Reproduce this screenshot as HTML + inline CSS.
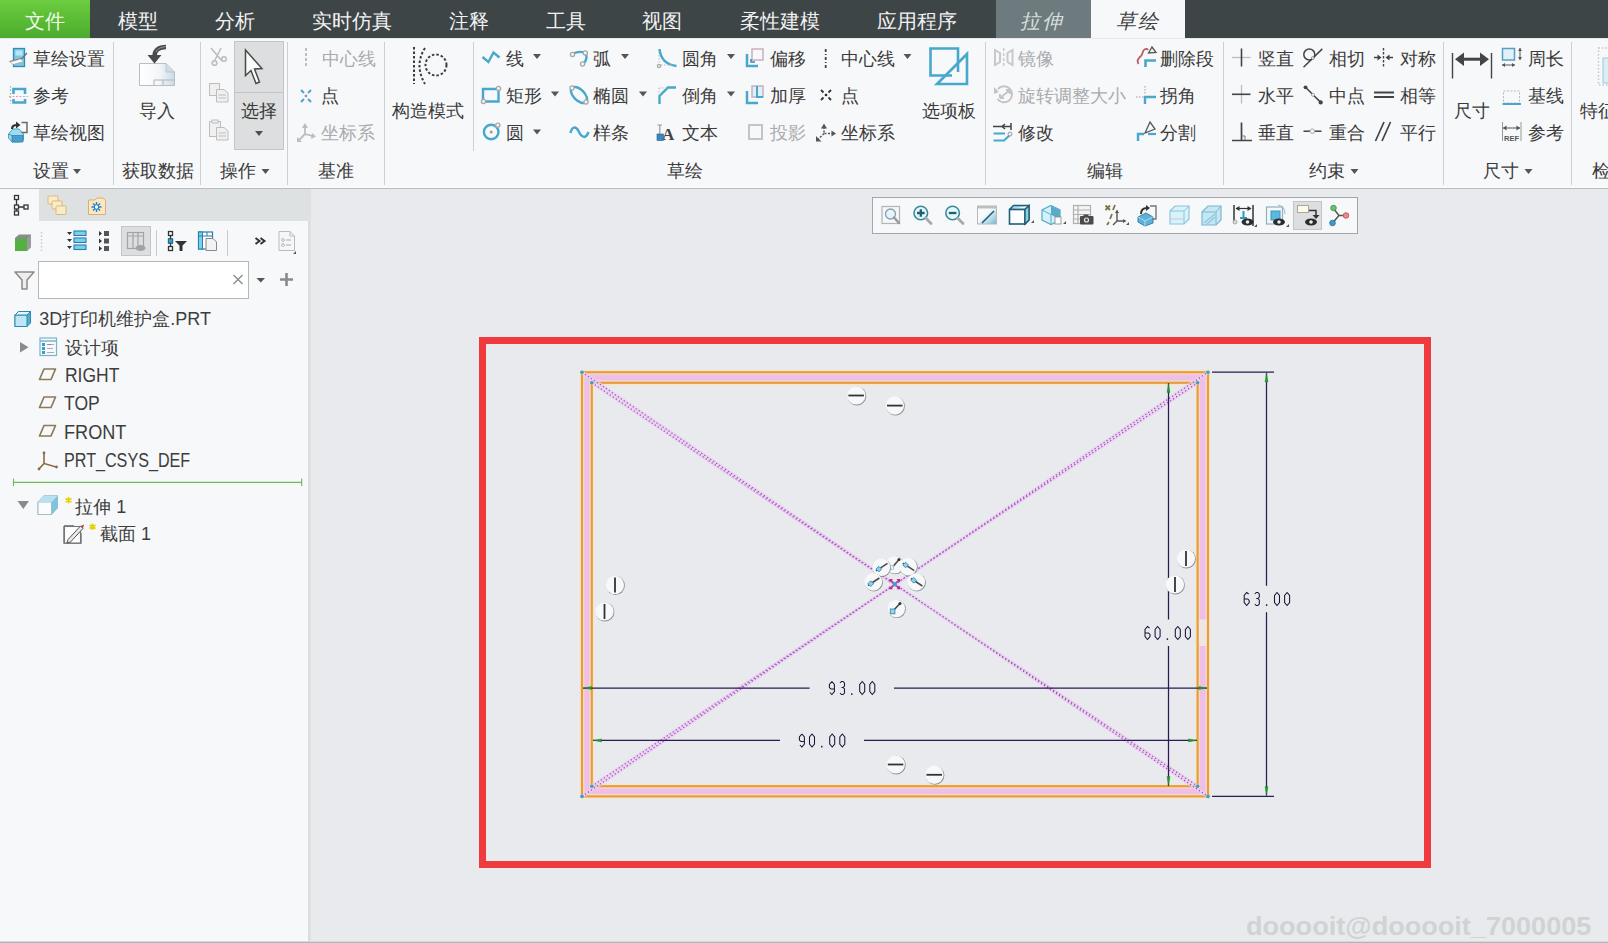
<!DOCTYPE html>
<html><head><meta charset="utf-8"><style>
html,body{margin:0;padding:0;width:1608px;height:943px;overflow:hidden;background:#e9eaed}
.t{position:absolute;white-space:nowrap;font-family:'Liberation Sans',sans-serif}
svg{position:absolute;left:0;top:0}
</style></head><body>
<div style="position:absolute;left:0px;top:0px;width:1608px;height:38px;background:#3d4547"></div><div style="position:absolute;left:0px;top:0px;width:90px;height:38px;background:linear-gradient(#6ccd40,#4aac2b)"></div><div style="position:absolute;left:996px;top:0px;width:95px;height:38px;background:#6d7b7e"></div><div style="position:absolute;left:1091px;top:0px;width:94px;height:38px;background:#f7f8fa"></div><div style="position:absolute;left:0px;top:39px;width:1608px;height:149px;background:#f7f8fa"></div><div style="position:absolute;left:0px;top:187px;width:1608px;height:1px;background:#fdfdfe"></div><div style="position:absolute;left:0px;top:188px;width:1608px;height:1px;background:#b9bcbf"></div><div style="position:absolute;left:0px;top:189px;width:309px;height:754px;background:#f7f8fa"></div><div style="position:absolute;left:39px;top:189px;width:272px;height:32px;background:#dde1e1"></div><div style="position:absolute;left:308px;top:221px;width:2px;height:722px;background:#d9dddd"></div><div style="position:absolute;left:310px;top:221px;width:1px;height:722px;background:#e1e3e4"></div><div style="position:absolute;left:311px;top:189px;width:1297px;height:754px;background:#e9eaed"></div><div style="position:absolute;left:0px;top:941px;width:1608px;height:1px;background:#d5dcdc"></div><div style="position:absolute;left:0px;top:942px;width:1608px;height:1px;background:#a9b8b8"></div><div class="t" style="left:117.6px;top:11.0px;font-size:20px;line-height:20px;color:#f2f2f2;">模型</div><div class="t" style="left:214.6px;top:11.0px;font-size:20px;line-height:20px;color:#f2f2f2;">分析</div><div class="t" style="left:311.6px;top:11.0px;font-size:20px;line-height:20px;color:#f2f2f2;">实时仿真</div><div class="t" style="left:448.6px;top:11.0px;font-size:20px;line-height:20px;color:#f2f2f2;">注释</div><div class="t" style="left:545.6px;top:11.0px;font-size:20px;line-height:20px;color:#f2f2f2;">工具</div><div class="t" style="left:641.6px;top:11.0px;font-size:20px;line-height:20px;color:#f2f2f2;">视图</div><div class="t" style="left:740.1px;top:11.0px;font-size:20px;line-height:20px;color:#f2f2f2;">柔性建模</div><div class="t" style="left:876.6px;top:11.0px;font-size:20px;line-height:20px;color:#f2f2f2;">应用程序</div><div class="t" style="left:24.6px;top:11.0px;font-size:20px;line-height:20px;color:#f0f8ea;">文件</div><div class="t" style="left:1019.6px;top:11.0px;font-size:20px;line-height:20px;color:#d6dcdc;font-style:italic;letter-spacing:2px;">拉伸</div><div class="t" style="left:1115.6px;top:11.0px;font-size:20px;line-height:20px;color:#404040;font-style:italic;letter-spacing:2px;">草绘</div><div style="position:absolute;left:113px;top:42px;width:1px;height:143px;background:#cdd0d2"></div><div style="position:absolute;left:200px;top:42px;width:1px;height:143px;background:#cdd0d2"></div><div style="position:absolute;left:287px;top:42px;width:1px;height:143px;background:#cdd0d2"></div><div style="position:absolute;left:384px;top:42px;width:1px;height:143px;background:#cdd0d2"></div><div style="position:absolute;left:985px;top:42px;width:1px;height:143px;background:#cdd0d2"></div><div style="position:absolute;left:1223px;top:42px;width:1px;height:143px;background:#cdd0d2"></div><div style="position:absolute;left:1443px;top:42px;width:1px;height:143px;background:#cdd0d2"></div><div style="position:absolute;left:1571px;top:42px;width:1px;height:143px;background:#cdd0d2"></div><div style="position:absolute;left:473px;top:42px;width:1px;height:109px;background:#cdd0d2"></div><div class="t" style="left:32.6px;top:50.0px;font-size:18px;line-height:18px;color:#3b3b3b;">草绘设置</div><div class="t" style="left:32.6px;top:86.5px;font-size:18px;line-height:18px;color:#3b3b3b;">参考</div><div class="t" style="left:32.6px;top:123.6px;font-size:18px;line-height:18px;color:#3b3b3b;">草绘视图</div><div class="t" style="left:32.6px;top:161.8px;font-size:18px;line-height:18px;color:#3b3b3b;">设置</div><div class="t" style="left:121.6px;top:161.8px;font-size:18px;line-height:18px;color:#3b3b3b;">获取数据</div><div class="t" style="left:138.6px;top:101.8px;font-size:18px;line-height:18px;color:#3b3b3b;">导入</div><div style="position:absolute;left:234px;top:41px;width:50px;height:109px;background:#dcdee0;border:1px solid #c3c6c8;box-sizing:border-box"></div><div style="position:absolute;left:235px;top:92px;width:48px;height:1px;background:#c3c6c8"></div><div class="t" style="left:241.1px;top:101.8px;font-size:18px;line-height:18px;color:#3b3b3b;">选择</div><div class="t" style="left:220.1px;top:161.8px;font-size:18px;line-height:18px;color:#3b3b3b;">操作</div><div class="t" style="left:321.6px;top:50.0px;font-size:18px;line-height:18px;color:#a9abad;">中心线</div><div class="t" style="left:320.6px;top:86.5px;font-size:18px;line-height:18px;color:#3b3b3b;">点</div><div class="t" style="left:320.6px;top:123.6px;font-size:18px;line-height:18px;color:#a9abad;">坐标系</div><div class="t" style="left:317.6px;top:161.8px;font-size:18px;line-height:18px;color:#3b3b3b;">基准</div><div class="t" style="left:391.6px;top:101.8px;font-size:18px;line-height:18px;color:#3b3b3b;">构造模式</div><div class="t" style="left:505.6px;top:50.0px;font-size:18px;line-height:18px;color:#3b3b3b;">线</div><div class="t" style="left:505.6px;top:86.5px;font-size:18px;line-height:18px;color:#3b3b3b;">矩形</div><div class="t" style="left:505.6px;top:123.6px;font-size:18px;line-height:18px;color:#3b3b3b;">圆</div><div class="t" style="left:593.0px;top:50.0px;font-size:18px;line-height:18px;color:#3b3b3b;">弧</div><div class="t" style="left:593.0px;top:86.5px;font-size:18px;line-height:18px;color:#3b3b3b;">椭圆</div><div class="t" style="left:593.0px;top:123.6px;font-size:18px;line-height:18px;color:#3b3b3b;">样条</div><div class="t" style="left:682.0px;top:50.0px;font-size:18px;line-height:18px;color:#3b3b3b;">圆角</div><div class="t" style="left:682.0px;top:86.5px;font-size:18px;line-height:18px;color:#3b3b3b;">倒角</div><div class="t" style="left:682.0px;top:123.6px;font-size:18px;line-height:18px;color:#3b3b3b;">文本</div><div class="t" style="left:770.1px;top:50.0px;font-size:18px;line-height:18px;color:#3b3b3b;">偏移</div><div class="t" style="left:770.1px;top:86.5px;font-size:18px;line-height:18px;color:#3b3b3b;">加厚</div><div class="t" style="left:770.1px;top:123.6px;font-size:18px;line-height:18px;color:#a9abad;">投影</div><div class="t" style="left:841.1px;top:50.0px;font-size:18px;line-height:18px;color:#3b3b3b;">中心线</div><div class="t" style="left:841.1px;top:86.5px;font-size:18px;line-height:18px;color:#3b3b3b;">点</div><div class="t" style="left:841.1px;top:123.6px;font-size:18px;line-height:18px;color:#3b3b3b;">坐标系</div><div class="t" style="left:921.6px;top:101.8px;font-size:18px;line-height:18px;color:#3b3b3b;">选项板</div><div class="t" style="left:666.6px;top:161.8px;font-size:18px;line-height:18px;color:#3b3b3b;">草绘</div><div class="t" style="left:1017.6px;top:50.0px;font-size:18px;line-height:18px;color:#a9abad;">镜像</div><div class="t" style="left:1017.6px;top:86.5px;font-size:18px;line-height:18px;color:#a9abad;">旋转调整大小</div><div class="t" style="left:1017.6px;top:123.6px;font-size:18px;line-height:18px;color:#3b3b3b;">修改</div><div class="t" style="left:1160.2px;top:50.0px;font-size:18px;line-height:18px;color:#3b3b3b;">删除段</div><div class="t" style="left:1160.2px;top:86.5px;font-size:18px;line-height:18px;color:#3b3b3b;">拐角</div><div class="t" style="left:1160.2px;top:123.6px;font-size:18px;line-height:18px;color:#3b3b3b;">分割</div><div class="t" style="left:1086.6px;top:161.8px;font-size:18px;line-height:18px;color:#3b3b3b;">编辑</div><div class="t" style="left:1257.6px;top:50.0px;font-size:18px;line-height:18px;color:#3b3b3b;">竖直</div><div class="t" style="left:1257.6px;top:86.5px;font-size:18px;line-height:18px;color:#3b3b3b;">水平</div><div class="t" style="left:1257.6px;top:123.6px;font-size:18px;line-height:18px;color:#3b3b3b;">垂直</div><div class="t" style="left:1328.6px;top:50.0px;font-size:18px;line-height:18px;color:#3b3b3b;">相切</div><div class="t" style="left:1328.6px;top:86.5px;font-size:18px;line-height:18px;color:#3b3b3b;">中点</div><div class="t" style="left:1328.6px;top:123.6px;font-size:18px;line-height:18px;color:#3b3b3b;">重合</div><div class="t" style="left:1399.6px;top:50.0px;font-size:18px;line-height:18px;color:#3b3b3b;">对称</div><div class="t" style="left:1399.6px;top:86.5px;font-size:18px;line-height:18px;color:#3b3b3b;">相等</div><div class="t" style="left:1399.6px;top:123.6px;font-size:18px;line-height:18px;color:#3b3b3b;">平行</div><div class="t" style="left:1309.1px;top:161.8px;font-size:18px;line-height:18px;color:#3b3b3b;">约束</div><div class="t" style="left:1454.1px;top:101.8px;font-size:18px;line-height:18px;color:#3b3b3b;">尺寸</div><div class="t" style="left:1527.6px;top:50.0px;font-size:18px;line-height:18px;color:#3b3b3b;">周长</div><div class="t" style="left:1527.6px;top:86.5px;font-size:18px;line-height:18px;color:#3b3b3b;">基线</div><div class="t" style="left:1527.6px;top:123.6px;font-size:18px;line-height:18px;color:#3b3b3b;">参考</div><div class="t" style="left:1483.1px;top:161.8px;font-size:18px;line-height:18px;color:#3b3b3b;">尺寸</div><div class="t" style="left:1579.6px;top:101.8px;font-size:18px;line-height:18px;color:#3b3b3b;">特征</div><div class="t" style="left:1591.6px;top:161.8px;font-size:18px;line-height:18px;color:#3b3b3b;">检</div><div style="position:absolute;left:38px;top:261px;width:211px;height:38px;background:#fff;border:1px solid #b5b8ba;box-sizing:border-box"></div><div class="t" style="left:39.3px;top:310.3px;font-size:18px;line-height:18px;color:#3d3d3d;">3D打印机维护盒.PRT</div><div class="t" style="left:64.6px;top:338.8px;font-size:18px;line-height:18px;color:#3d3d3d;">设计项</div><div class="t" style="left:64.7px;top:365.0px;font-size:20px;line-height:20px;color:#3d3d3d;transform:scaleX(0.874);transform-origin:0 0">RIGHT</div><div class="t" style="left:64.3px;top:393.0px;font-size:20px;line-height:20px;color:#3d3d3d;transform:scaleX(0.876);transform-origin:0 0">TOP</div><div class="t" style="left:63.7px;top:421.7px;font-size:20px;line-height:20px;color:#3d3d3d;transform:scaleX(0.906);transform-origin:0 0">FRONT</div><div class="t" style="left:63.7px;top:449.6px;font-size:20px;line-height:20px;color:#3d3d3d;transform:scaleX(0.807);transform-origin:0 0">PRT_CSYS_DEF</div><div class="t" style="left:75.3px;top:497.8px;font-size:18px;line-height:18px;color:#3d3d3d;">拉伸 1</div><div class="t" style="left:100.1px;top:524.8px;font-size:18px;line-height:18px;color:#3d3d3d;">截面 1</div><div class="t" style="left:1246px;top:913.5px;font-size:25px;line-height:25px;font-weight:bold;color:#d1d2d4;transform:scaleX(1.083);transform-origin:0 0">dooooit@dooooit_7000005</div><div style="position:absolute;left:872px;top:197px;width:486px;height:37px;background:#f7f8fa;border:1px solid #a3a7aa;box-sizing:border-box"></div><div style="position:absolute;left:1293px;top:201px;width:29px;height:29px;background:#dcdee0;border:1px solid #c3c6c8;box-sizing:border-box"></div><div style="position:absolute;left:121px;top:226px;width:30px;height:30px;background:#dcdee0;border:1px solid #c3c6c8;box-sizing:border-box"></div><div style="position:absolute;left:156px;top:230px;width:1px;height:26px;background:#c9cbcd"></div><div style="position:absolute;left:227px;top:230px;width:1px;height:26px;background:#c9cbcd"></div>
<svg width="1608" height="943" viewBox="0 0 1608 943">
<path d="M73,169 h8 l-4,5 z" fill="#555"/><path d="M255,131 h8 l-4,5 z" fill="#505050"/><path d="M261.5,169 h8 l-4,5 z" fill="#555"/><path d="M533,54 h8 l-4,5 z" fill="#555"/><path d="M551,91.5 h8 l-4,5 z" fill="#555"/><path d="M533,129.5 h8 l-4,5 z" fill="#555"/><path d="M621,54 h8 l-4,5 z" fill="#555"/><path d="M639,91.5 h8 l-4,5 z" fill="#555"/><path d="M727,54 h8 l-4,5 z" fill="#555"/><path d="M727,91.5 h8 l-4,5 z" fill="#555"/><path d="M903.5,54 h8 l-4,5 z" fill="#555"/><path d="M1350.5,169 h8 l-4,5 z" fill="#555"/><path d="M1524.5,169 h8 l-4,5 z" fill="#555"/><rect x="482.5" y="340.5" width="945" height="524" fill="none" stroke="#ef3b3e" stroke-width="7"/><path d="M582,372.2 H1208 V796.4 H582 Z M591.8,382.8 V786.2 H1197.6 V382.8 Z" fill="#eec0e8" fill-rule="evenodd"/><rect x="582" y="372.2" width="626" height="424.2" fill="none" stroke="#fbe3b4" stroke-width="4.6" opacity="0.75"/><rect x="591.8" y="382.8" width="605.8" height="403.40000000000003" fill="none" stroke="#fbe3b4" stroke-width="4.6" opacity="0.75"/><path d="M582,372.2 H1208 V796.4 H582 Z M594.0999999999999,380.5 V783.9000000000001 H1195.3 V385.1 Z" fill="none"/><rect x="582" y="372.2" width="626" height="424.2" fill="none" stroke="#e49c3c" stroke-width="2.1"/><rect x="591.8" y="382.8" width="605.8" height="403.40000000000003" fill="none" stroke="#e49c3c" stroke-width="2.1"/><path d="M582,372.2 L1208,796.4 M582,796.4 L1208,372.2 M591.8,382.8 L1197.6,786.2 M591.8,786.2 L1197.6,382.8" stroke="#eecdf2" stroke-width="3.6" fill="none" opacity="0.8"/><path d="M582,372.2 L1208,796.4 M582,796.4 L1208,372.2 M591.8,382.8 L1197.6,786.2 M591.8,786.2 L1197.6,382.8" stroke="#9458b2" stroke-width="1.25" stroke-dasharray="1.3 2.3" fill="none"/><rect x="1199" y="619.5" width="7.6" height="26.5" fill="#efe6e4"/><circle cx="582" cy="372.2" r="1.8" fill="#35a2c0"/><circle cx="1208" cy="372.2" r="1.8" fill="#35a2c0"/><circle cx="582" cy="796.4" r="1.8" fill="#35a2c0"/><circle cx="1208" cy="796.4" r="1.8" fill="#35a2c0"/><circle cx="591.8" cy="382.8" r="1.8" fill="#35a2c0"/><circle cx="1197.6" cy="382.8" r="1.8" fill="#35a2c0"/><circle cx="591.8" cy="786.2" r="1.8" fill="#35a2c0"/><circle cx="1197.6" cy="786.2" r="1.8" fill="#35a2c0"/><path d="M583,688 H809.6 M894,688 H1207 M593,740.4 H780 M864,740.4 H1197 M1168.5,383 V619.6 M1168.5,646 V786 M1266.5,373 V585.8 M1266.5,612.2 V795.5 M1212,372.2 H1274 M1212,796.4 H1274" stroke="#2b1b52" stroke-width="1.25" fill="none"/><path d="M583.5,688 l8,-1.5 v3 z" fill="#1e9a2a" stroke="#1a8a1a" stroke-width="0.4"/><path d="M1207,688 l-8,-1.5 v3 z" fill="#1e9a2a" stroke="#1a8a1a" stroke-width="0.4"/><path d="M593.5,740.4 l8,-1.5 v3 z" fill="#1e9a2a" stroke="#1a8a1a" stroke-width="0.4"/><path d="M1196.5,740.4 l-8,-1.5 v3 z" fill="#1e9a2a" stroke="#1a8a1a" stroke-width="0.4"/><path d="M1168.5,383.5 l-1.5,9 h3 z" fill="#1e9a2a" stroke="#1a8a1a" stroke-width="0.4"/><path d="M1168.5,785.5 l-1.5,-9 h3 z" fill="#1e9a2a" stroke="#1a8a1a" stroke-width="0.4"/><path d="M1266.5,373 l-1.5,9 h3 z" fill="#1e9a2a" stroke="#1a8a1a" stroke-width="0.4"/><path d="M1266.5,795.5 l-1.5,-9 h3 z" fill="#1e9a2a" stroke="#1a8a1a" stroke-width="0.4"/><path transform="translate(828.9,681)" d="M3,0.5 L0.5,3.5 V6.5 L2,8 H5.5 M3,0.5 L5.5,3.5 V10.5 L3,13.5 L1,11.5" stroke="#1b1238" stroke-width="1.05" fill="none"/><path transform="translate(839.0,681)" d="M1,2 L2.5,0.5 H4 L5.5,2 V5 L4,6.5 H2.5 M4,6.5 L5.5,8 V12 L4,13.5 H2.5 L1,12" stroke="#1b1238" stroke-width="1.05" fill="none"/><rect x="851.1" y="693.3" width="1.4" height="1.6" fill="#1b1238"/><path transform="translate(859.2,681)" d="M3,0.5 L0.5,3.5 V10.5 L3,13.5 L5.5,10.5 V3.5 Z" stroke="#1b1238" stroke-width="1.05" fill="none"/><path transform="translate(869.3,681)" d="M3,0.5 L0.5,3.5 V10.5 L3,13.5 L5.5,10.5 V3.5 Z" stroke="#1b1238" stroke-width="1.05" fill="none"/><path transform="translate(798.9,733.5)" d="M3,0.5 L0.5,3.5 V6.5 L2,8 H5.5 M3,0.5 L5.5,3.5 V10.5 L3,13.5 L1,11.5" stroke="#1b1238" stroke-width="1.05" fill="none"/><path transform="translate(809.0,733.5)" d="M3,0.5 L0.5,3.5 V10.5 L3,13.5 L5.5,10.5 V3.5 Z" stroke="#1b1238" stroke-width="1.05" fill="none"/><rect x="821.1" y="745.8" width="1.4" height="1.6" fill="#1b1238"/><path transform="translate(829.2,733.5)" d="M3,0.5 L0.5,3.5 V10.5 L3,13.5 L5.5,10.5 V3.5 Z" stroke="#1b1238" stroke-width="1.05" fill="none"/><path transform="translate(839.3,733.5)" d="M3,0.5 L0.5,3.5 V10.5 L3,13.5 L5.5,10.5 V3.5 Z" stroke="#1b1238" stroke-width="1.05" fill="none"/><path transform="translate(1144.5,626)" d="M5,2 L3,0.5 L0.5,3.5 V10.5 L3,13.5 L5.5,10.5 V8.5 L4,7 H0.5" stroke="#1b1238" stroke-width="1.05" fill="none"/><path transform="translate(1154.6,626)" d="M3,0.5 L0.5,3.5 V10.5 L3,13.5 L5.5,10.5 V3.5 Z" stroke="#1b1238" stroke-width="1.05" fill="none"/><rect x="1166.7" y="638.3" width="1.4" height="1.6" fill="#1b1238"/><path transform="translate(1174.8,626)" d="M3,0.5 L0.5,3.5 V10.5 L3,13.5 L5.5,10.5 V3.5 Z" stroke="#1b1238" stroke-width="1.05" fill="none"/><path transform="translate(1184.9,626)" d="M3,0.5 L0.5,3.5 V10.5 L3,13.5 L5.5,10.5 V3.5 Z" stroke="#1b1238" stroke-width="1.05" fill="none"/><path transform="translate(1243.7,592)" d="M5,2 L3,0.5 L0.5,3.5 V10.5 L3,13.5 L5.5,10.5 V8.5 L4,7 H0.5" stroke="#1b1238" stroke-width="1.05" fill="none"/><path transform="translate(1253.8,592)" d="M1,2 L2.5,0.5 H4 L5.5,2 V5 L4,6.5 H2.5 M4,6.5 L5.5,8 V12 L4,13.5 H2.5 L1,12" stroke="#1b1238" stroke-width="1.05" fill="none"/><rect x="1265.9" y="604.3" width="1.4" height="1.6" fill="#1b1238"/><path transform="translate(1274.0,592)" d="M3,0.5 L0.5,3.5 V10.5 L3,13.5 L5.5,10.5 V3.5 Z" stroke="#1b1238" stroke-width="1.05" fill="none"/><path transform="translate(1284.1,592)" d="M3,0.5 L0.5,3.5 V10.5 L3,13.5 L5.5,10.5 V3.5 Z" stroke="#1b1238" stroke-width="1.05" fill="none"/><circle cx="856.9" cy="396.0" r="9.399999999999999" fill="#8e9196"/><circle cx="856.3" cy="395.4" r="9.2" fill="#f7f8fa"/><path d="M848.4,395.5 H863.9" stroke="#333" stroke-width="1.8"/><circle cx="895.5" cy="406.1" r="9.399999999999999" fill="#8e9196"/><circle cx="894.9" cy="405.5" r="9.2" fill="#f7f8fa"/><path d="M887,405.6 H902.5" stroke="#333" stroke-width="1.8"/><circle cx="615.5" cy="585.5" r="9.399999999999999" fill="#8e9196"/><circle cx="614.9" cy="584.9" r="9.2" fill="#f7f8fa"/><path d="M615,577.5 V592.5" stroke="#333" stroke-width="1.8"/><circle cx="605.0" cy="612.0" r="9.399999999999999" fill="#8e9196"/><circle cx="604.4" cy="611.4" r="9.2" fill="#f7f8fa"/><path d="M604.5,604.0 V619.0" stroke="#333" stroke-width="1.8"/><circle cx="1186.5" cy="559.0" r="9.399999999999999" fill="#8e9196"/><circle cx="1185.9" cy="558.4" r="9.2" fill="#f7f8fa"/><path d="M1186,551.0 V566.0" stroke="#333" stroke-width="1.8"/><circle cx="1175.5" cy="585.0" r="9.399999999999999" fill="#8e9196"/><circle cx="1174.9" cy="584.4" r="9.2" fill="#f7f8fa"/><path d="M1175,577.0 V592.0" stroke="#333" stroke-width="1.8"/><circle cx="896.3" cy="765.0" r="9.399999999999999" fill="#8e9196"/><circle cx="895.6999999999999" cy="764.4" r="9.2" fill="#f7f8fa"/><path d="M887.8,764.5 H903.3" stroke="#333" stroke-width="1.8"/><circle cx="935.0" cy="775.3" r="9.399999999999999" fill="#8e9196"/><circle cx="934.4" cy="774.6999999999999" r="9.2" fill="#f7f8fa"/><path d="M926.5,774.8 H942.0" stroke="#333" stroke-width="1.8"/><circle cx="895.4" cy="565.3" r="9.0" fill="#8e9196"/><circle cx="894.8" cy="564.6999999999999" r="8.8" fill="#f7f8fa"/><path d="M891,569 L899,559.5" stroke="#4a4a4a" stroke-width="1.5"/><circle cx="899" cy="559.5" r="1.5" fill="#333"/><rect x="890" y="565.5" width="3.5" height="4" fill="#dff2f8" stroke="#8fc4d8" stroke-width="0.7"/><circle cx="882.0" cy="567.9" r="9.0" fill="#8e9196"/><circle cx="881.4" cy="567.3" r="8.8" fill="#f7f8fa"/><path d="M876.0,570.9 L887.5,563.4" stroke="#4a4a4a" stroke-width="1.5"/><rect x="876.8" y="567.1" width="4" height="4" transform="rotate(45 878.8 569.1)" fill="#86d3ec" stroke="#3d8fae" stroke-width="0.9"/><circle cx="908.8" cy="567.2" r="9.0" fill="#8e9196"/><circle cx="908.1999999999999" cy="566.6" r="8.8" fill="#f7f8fa"/><path d="M902.8,563.2 L914.3,570.7" stroke="#4a4a4a" stroke-width="1.5"/><rect x="903.5999999999999" y="563.0" width="4" height="4" transform="rotate(45 905.5999999999999 565.0)" fill="#86d3ec" stroke="#3d8fae" stroke-width="0.9"/><circle cx="873.9" cy="582.5" r="9.0" fill="#8e9196"/><circle cx="873.3" cy="581.9" r="8.8" fill="#f7f8fa"/><path d="M867.9,585.5 L879.4,578" stroke="#4a4a4a" stroke-width="1.5"/><rect x="868.6999999999999" y="581.7" width="4" height="4" transform="rotate(45 870.6999999999999 583.7)" fill="#86d3ec" stroke="#3d8fae" stroke-width="0.9"/><circle cx="916.9" cy="582.5" r="9.0" fill="#8e9196"/><circle cx="916.3" cy="581.9" r="8.8" fill="#f7f8fa"/><path d="M910.9,578.5 L922.4,586" stroke="#4a4a4a" stroke-width="1.5"/><rect x="911.6999999999999" y="578.3" width="4" height="4" transform="rotate(45 913.6999999999999 580.3)" fill="#86d3ec" stroke="#3d8fae" stroke-width="0.9"/><circle cx="896.9" cy="609.1" r="9.0" fill="#8e9196"/><circle cx="896.3" cy="608.5" r="8.8" fill="#f7f8fa"/><path d="M893,611 L900,603.5" stroke="#444" stroke-width="1.5"/><circle cx="900" cy="603.5" r="1.5" fill="#333"/><rect x="890.3" y="609" width="4.6" height="4.8" fill="#8fd8ef" stroke="#3a8aa8" stroke-width="0.9"/><path d="M890.5,580 L899,588.5 M899,580 L890.5,588.5" stroke="#c2309a" stroke-width="1.6"/><path d="M889.5,579 h3.5 l-3.5,3.5z M900,579 h-3.5 l3.5,3.5z M889.5,589.3 h3.5 l-3.5,-3.5z M900,589.3 h-3.5 l3.5,-3.5z" fill="#b02a9a"/><rect x="892.8" y="582.3" width="4" height="4" fill="#4a9cc0"/><rect x="13.5" y="48.5" width="11" height="18" fill="#7cc8e4" stroke="#2e8db5" stroke-width="1.3"/><rect x="15.5" y="50.5" width="7" height="5" fill="#b8e4f4"/><path d="M9.5,61.5 L22,58.5 L27,53" stroke="#6a6a6a" stroke-width="1.2" fill="none"/><path d="M10,62 L20.5,59 L24,61.5 L13,64.5 Z" fill="#fafafa" stroke="#999" stroke-width="0.6"/><path d="M13.5,94 V89 H25 V94 M13.5,99 V102.5 H25 V99" fill="none" stroke="#47a7cc" stroke-width="2.6"/><path d="M10.5,86 V104" stroke="#9ab8b8" stroke-width="1.3" stroke-dasharray="1.5 2"/><path d="M9,96.5 H28" stroke="#d9a0c8" stroke-width="1.1" stroke-dasharray="2 1.5"/><path d="M8.5,134 L13,129 H19 L23.5,134 V140 L19,142 H12 L8.5,138 Z" fill="#9fdcf0" stroke="#4aa6c8" stroke-width="1"/><path d="M12,135.5 H23 V142 H12 Z" fill="#4aa0cc" stroke="#2f86b0" stroke-width="0.8"/><path d="M8.5,134 L12,135.5" stroke="#2f86b0" stroke-width="0.8"/><path d="M12,129 Q12,125 17,125" stroke="#333" stroke-width="2.2" fill="none"/><path d="M16,121.5 L20.5,125 L16,128.5 Z" fill="#333"/><path d="M21.5,122.5 H27 V132.5 H21.5" stroke="#6a6a6a" stroke-width="1.5" fill="none"/><defs><linearGradient id="gdoc" x1="0" x2="1"><stop offset="0" stop-color="#ffffff"/><stop offset="0.55" stop-color="#f4f7f9"/><stop offset="1" stop-color="#c9dbe6"/></linearGradient></defs><path d="M139.5,63.5 H166 L174.5,72 V85.5 H139.5 Z" fill="url(#gdoc)" stroke="#b9bfc4" stroke-width="1"/><path d="M166,63.5 V72 H174.5" fill="#cfdde6" stroke="#b9bfc4" stroke-width="0.8"/><path d="M154,80 H174.5 M154,80 V85.5 M163,80 V85.5" stroke="#b0b5b9" stroke-width="1" fill="none"/><path d="M166,47 C159,47 154.5,50 154.5,56" stroke="#4a4a4a" stroke-width="4.5" fill="none"/><path d="M147.5,55 H161.5 L154.5,63.5 Z" fill="#4a4a4a"/><path d="M166,46.5 C160,47.5 157,49 156,52" stroke="#9a9a9a" stroke-width="1" fill="none"/><g stroke="#bdbdbd" fill="none" stroke-width="1.6"><path d="M211,48 L222,61 M221,48 L215,60"/><circle cx="214.5" cy="63" r="2.3"/><circle cx="224" cy="59" r="2.3"/></g><g stroke="#bdbdbd" fill="#f0f0f0" stroke-width="1"><rect x="209.5" y="83.5" width="10" height="12"/><path d="M216.5,89.5 H224 L228,93 V102 H216.5 Z"/><path d="M218.5,95 H226 M218.5,98 H226" /></g><g stroke="#bdbdbd" fill="#f0f0f0" stroke-width="1"><rect x="209.5" y="121.5" width="11" height="15"/><rect x="212" y="120" width="6" height="3"/><path d="M216.5,127.5 H224 L228,131 V140 H216.5 Z"/><path d="M218.5,133 H226 M218.5,136 H226"/></g><path d="M245.5,50 V75.5 L251,70.5 L256,83.5 L259.5,82 L254.5,69 L262,68.5 Z" fill="#fbfbfb" stroke="#4a4a4a" stroke-width="1.5" stroke-linejoin="miter"/><path d="M306,48 V68" stroke="#bdbdbd" stroke-width="2" stroke-dasharray="3 2"/><g stroke="#47a7cc" stroke-width="2"><path d="M301,90 L304,93 M311,90 L308,93 M301,102 L304,99 M311,102 L308,99"/></g><circle cx="306" cy="96" r="1.4" fill="#999"/><g stroke="#bdbdbd" stroke-width="1.8" fill="none"><path d="M305,126 V134 L313,136 M305,134 L298,141"/></g><path d="M302,128 L305,123 L308,128 Z M312,133 L316,136.5 L311,139 Z M297,137 L297,142 L302,142 Z" fill="#bdbdbd"/><g stroke="#3c3c3c" stroke-width="2" fill="none" stroke-dasharray="2.5 2"><path d="M414,47 V84"/><path d="M425,48 Q414,65 425,84"/><circle cx="436" cy="65" r="10.5"/></g><path d="M482.5,57 L488.4,62 L493.5,52.5 L499.5,57.5" stroke="#47a7cc" stroke-width="2.4" fill="none"/><path d="M483,89 H498.5 V101.5 H483 Z" stroke="#47a7cc" stroke-width="2.4" fill="none"/><circle cx="498.5" cy="88.5" r="2.1" fill="#f4f4f4" stroke="#a8a8a8" stroke-width="1.3"/><circle cx="483.5" cy="101.5" r="2.1" fill="#f4f4f4" stroke="#a8a8a8" stroke-width="1.3"/><circle cx="491.2" cy="132" r="7.3" stroke="#47a7cc" stroke-width="2.4" fill="none"/><circle cx="491.2" cy="132" r="1.6" fill="#a0a0a0"/><circle cx="497.8" cy="125.3" r="2.1" fill="#f4f4f4" stroke="#a8a8a8" stroke-width="1.3"/><path d="M573,53.5 Q580,50.5 585,53 Q589,58 583,64" stroke="#47a7cc" stroke-width="2.4" fill="none"/><circle cx="572.5" cy="54.5" r="2.1" fill="#f4f4f4" stroke="#a8a8a8" stroke-width="1.3"/><circle cx="585.3" cy="53" r="2.1" fill="#f4f4f4" stroke="#a8a8a8" stroke-width="1.3"/><circle cx="582.6" cy="64" r="2.1" fill="#f4f4f4" stroke="#a8a8a8" stroke-width="1.3"/><ellipse cx="579" cy="95" rx="10" ry="5.5" transform="rotate(45 579 95)" stroke="#47a7cc" stroke-width="2.4" fill="none"/><circle cx="572" cy="88" r="2.1" fill="#f4f4f4" stroke="#a8a8a8" stroke-width="1.3"/><circle cx="586" cy="102" r="2.1" fill="#f4f4f4" stroke="#a8a8a8" stroke-width="1.3"/><path d="M570.5,133 C572,126 576,126 579,132 C582,138 586,139 588.5,132" stroke="#47a7cc" stroke-width="2.5" fill="none"/><path d="M659.5,49 Q661,64 676.5,66" stroke="#47a7cc" stroke-width="2.5" fill="none"/><path d="M659,52 V65 H673" stroke="#bbb" stroke-width="1" stroke-dasharray="1.5 1.5" fill="none"/><circle cx="659" cy="66" r="1.6" fill="#f4f4f4" stroke="#a8a8a8" stroke-width="1.3"/><path d="M659.5,104 V96 L668,87.5 H676" stroke="#47a7cc" stroke-width="2.4" fill="none"/><path d="M659,88 H667 M659,88 V96" stroke="#bbb" stroke-width="1" stroke-dasharray="1.5 1.5" fill="none"/><text x="662" y="139.5" font-family="Liberation Serif" font-weight="bold" font-size="17" fill="#444">A</text><path d="M657.5,125 H662 M659.8,125 V134" stroke="#999" stroke-width="1.2"/><rect x="657" y="134" width="6.5" height="6.5" fill="#3a88c0" stroke="#1e5e90" stroke-width="0.6"/><path d="M747,54 V66 H758" stroke="#47a7cc" stroke-width="2.5" fill="none"/><rect x="752" y="49" width="11" height="11" stroke="#c8b0c0" stroke-width="1.5" fill="none"/><path d="M751,59 V62 H755" stroke="#2e8db5" stroke-width="1.5" fill="none"/><path d="M747,91 V103 H758" stroke="#47a7cc" stroke-width="2.5" fill="none"/><rect x="752" y="86" width="11" height="11" stroke="#c8b0c0" stroke-width="1.5" fill="#dff1f8"/><path d="M757,86 V97 H763" stroke="#47a7cc" stroke-width="2" fill="none"/><rect x="749" y="125" width="13" height="14" stroke="#c4c4c4" stroke-width="2" fill="none"/><path d="M825.7,49 V68" stroke="#444" stroke-width="1.8" stroke-dasharray="3 2 1 2"/><g stroke="#333" stroke-width="1.8"><path d="M821,90 L823.5,92.5 M831,90 L828.5,92.5 M821,100 L823.5,97.5 M831,100 L828.5,97.5"/></g><circle cx="826" cy="95" r="1.3" fill="#222"/><g stroke="#555" stroke-width="1.5" fill="none" stroke-dasharray="2 1.5"><path d="M824,127 V133.5 H832 M824,133.5 L818.5,139"/></g><path d="M821,128.5 L824,123.5 L827,128.5 Z M831.5,130.5 L836,133.5 L831.5,136.5 Z M816,136 V141.5 H821.5 Z" fill="#555"/><path d="M958,72 V48.5 H930.5 V75.5 H952" stroke="#47a7cc" stroke-width="2.6" fill="none"/><path d="M937,84 L967,54 V84 Z" stroke="#47a7cc" stroke-width="2.6" fill="none" stroke-linejoin="miter"/><g stroke="#c9c9c9" stroke-width="2" fill="none"><path d="M1003.7,48 V68" stroke-dasharray="3 2" stroke-width="1.5"/><path d="M1000,53 L995,50 V65 L1000,62 Z M1007.5,53 L1012.5,50 V65 L1007.5,62 Z"/></g><g stroke="#c4c4c4" stroke-width="2" fill="none"><path d="M998,89 A8,8 0 1 1 997.5,99"/><path d="M1000,98 L1010,90 M1000,98 V94 M1000,98 H1004 M1010,90 H1006 M1010,90 V94"/></g><path d="M994,87 L999,92 L994,94 Z" fill="#c4c4c4"/><path d="M993,126.5 H1011 M1011,123 V130 M1005,124 L1002,126.5 L1005,129" stroke="#444" stroke-width="1.5" fill="none"/><path d="M993.5,133.5 H1005 M993.5,140.5 H1004 L1010,135" stroke="#47a7cc" stroke-width="2.2" fill="none"/><circle cx="1010" cy="134" r="2" fill="#f4f4f4" stroke="#999" stroke-width="1"/><path d="M1138.5,64 C1136,60 1139,57.5 1141,56 C1143,54.5 1142,51 1144.5,49.5 C1146,48.5 1147.5,49 1148,50" stroke="#b8606a" stroke-width="1.8" fill="none"/><path d="M1145.5,67 V60.5 H1156" stroke="#47a7cc" stroke-width="2.6" fill="none"/><path d="M1148.5,53 L1152,47 L1156,52.5 Z" stroke="#555" stroke-width="1.3" fill="#f4f4f4"/><path d="M1145,86 V95" stroke="#bbb" stroke-width="1.5" stroke-dasharray="1.5 1.5"/><path d="M1136,97 H1144" stroke="#bbb" stroke-width="1.5" stroke-dasharray="1.5 1.5"/><path d="M1145,104 V97 H1156" stroke="#47a7cc" stroke-width="2.4" fill="none"/><path d="M1138,141 V134 H1144" stroke="#47a7cc" stroke-width="2.4" fill="none"/><path d="M1148,134 H1156" stroke="#47a7cc" stroke-width="2.2"/><path d="M1145,133 L1150,122 L1155,129 Z" stroke="#555" stroke-width="1.3" fill="none"/><path d="M1232,57.5 H1250.5" stroke="#bdbdbd" stroke-width="1.3"/><path d="M1241.5,48.5 V66.5" stroke="#444" stroke-width="1.6"/><path d="M1241.5,85 V103.5" stroke="#bdbdbd" stroke-width="1.3"/><path d="M1232,94.3 H1250.5" stroke="#444" stroke-width="1.6"/><path d="M1241.5,122.5 V140 M1232,140.5 H1252" stroke="#444" stroke-width="1.7" fill="none"/><path d="M1241.5,136 H1245 V140" stroke="#777" stroke-width="1" fill="none"/><circle cx="1309.3" cy="54.5" r="5.5" stroke="#444" stroke-width="1.5" fill="none"/><path d="M1303.5,67.3 L1322.3,48.9" stroke="#444" stroke-width="1.5"/><circle cx="1312.8" cy="58" r="1.4" fill="#eee" stroke="#888" stroke-width="0.8"/><path d="M1305.5,87.3 L1320.7,102.4" stroke="#444" stroke-width="1.5"/><circle cx="1305.5" cy="87.3" r="1.9" fill="#444"/><circle cx="1320.7" cy="102.4" r="2.1" fill="#444"/><circle cx="1313" cy="94.8" r="1.6" fill="#eee" stroke="#999" stroke-width="0.8"/><path d="M1303.5,131.2 H1321.5" stroke="#444" stroke-width="1.5"/><circle cx="1312.3" cy="131.2" r="2.3" fill="#f4f4f4" stroke="#aaa" stroke-width="1"/><path d="M1383.5,48 V67" stroke="#444" stroke-width="1.4" stroke-dasharray="2.5 1.5"/><path d="M1374,57.5 H1380 M1387,57.5 H1393" stroke="#444" stroke-width="1.4"/><path d="M1381.5,57.5 L1377.5,54.5 V60.5 Z M1385.5,57.5 L1389.5,54.5 V60.5 Z" fill="#444"/><path d="M1374,92.5 H1394 M1374,97 H1394" stroke="#444" stroke-width="1.9"/><path d="M1375.5,141 L1384,122 M1382,141 L1390.5,122" stroke="#444" stroke-width="1.7"/><path d="M1452.5,53 V78.5 M1491.5,53 V78.5" stroke="#444" stroke-width="1.4"/><path d="M1462,59.2 H1482" stroke="#444" stroke-width="3"/><path d="M1455,59.2 L1464,52.5 V66 Z M1489,59.2 L1480,52.5 V66 Z" fill="#444"/><rect x="1502.5" y="48.5" width="12" height="11.5" fill="#e0f2f8" stroke="#5a9fbf" stroke-width="1.5"/><path d="M1502,65 H1515 M1520,48 V60" stroke="#555" stroke-width="1"/><path d="M1502,65 l3,-2 v4 z M1515,65 l-3,-2 v4z M1520,48 l-2,3 h4z M1520,60 l-2,-3 h4z" fill="#555"/><rect x="1503.5" y="91" width="16" height="12" fill="none" stroke="#b9b9b9" stroke-width="1" stroke-dasharray="2 1.5"/><path d="M1502.5,104 H1521" stroke="#47a7cc" stroke-width="2"/><path d="M1502.5,122 V141 M1521,122 V141" stroke="#999" stroke-width="1"/><path d="M1503,128 H1520" stroke="#555" stroke-width="1"/><path d="M1503,128 l3.5,-2.5 v5z M1520,128 l-3.5,-2.5 v5z" fill="#555"/><text x="1504" y="140.5" font-family="Liberation Sans" font-weight="bold" font-size="7.5" fill="#555">REF</text><rect x="1598.5" y="48" width="14" height="37" fill="none" stroke="#c6c6c6" stroke-width="1.5" stroke-dasharray="1.5 2"/><rect x="1603" y="58" width="10" height="25" fill="#dbeef6" stroke="#9cc8dc" stroke-width="1"/><rect x="882" y="206.5" width="17.5" height="17" fill="#f2f8fb" stroke="#b4b4b4" stroke-width="1.2"/><circle cx="890.5" cy="214" r="5" fill="#e4f6fc" stroke="#8a9ea8" stroke-width="1.3"/><path d="M894,217.5 L899,223" stroke="#999" stroke-width="2.5" stroke-linecap="round"/><circle cx="920.8" cy="213" r="6.8" fill="#e6f7fc" stroke="#3c8a9a" stroke-width="1.6"/><path d="M917,213 H924.6 M920.8,209.2 V216.8" stroke="#1f5f70" stroke-width="2.3"/><path d="M925.8,218 L931,223.5" stroke="#a9a9a9" stroke-width="2.8" stroke-linecap="round"/><circle cx="952.6" cy="213" r="6.8" fill="#e6f7fc" stroke="#3c8a9a" stroke-width="1.6"/><path d="M948.8,213 H956.4" stroke="#1f5f70" stroke-width="2.3"/><path d="M957.6,218 L963,223.5" stroke="#a9a9a9" stroke-width="2.8" stroke-linecap="round"/><defs><linearGradient id="grp" x1="0" y1="0" x2="1" y2="1"><stop offset="0.45" stop-color="#f6fbfd"/><stop offset="1" stop-color="#6fb6d2"/></linearGradient></defs><rect x="977.5" y="206" width="19" height="18" fill="url(#grp)" stroke="#b8b8b8" stroke-width="1"/><rect x="977.5" y="206" width="19" height="2.5" fill="#bdbdbd"/><path d="M982,223 L994,211" stroke="#1f5f78" stroke-width="1.6"/><path d="M1009.5,209.5 H1025 L1029,205.5 M1009.5,209.5 L1013.5,205.5 H1029 V220 L1025,224 V209.5" fill="#a5dcef" stroke="#1f5f78" stroke-width="1.6" stroke-linejoin="round"/><rect x="1009.5" y="209.5" width="15.5" height="14.5" fill="#fbfdfe" stroke="#1f5f78" stroke-width="1.6"/><path d="M1029,205.5 V220 L1025,224 V209.5 Z" fill="#8fcfe6" stroke="#1f5f78" stroke-width="1.4"/><path d="M1031,223 l3,-3 v3 z" fill="#555"/><path d="M1051,205.5 L1060,210 V220 L1051,224.5 L1042,220 V210 Z" fill="#d4f0fa" stroke="#5ab0cc" stroke-width="1.3"/><path d="M1042,210 L1051,214.5 L1060,210 M1051,214.5 V224.5" stroke="#5ab0cc" stroke-width="1" fill="none"/><path d="M1051,205.5 L1060,210 V220 L1051,214.5 Z" fill="#5aaac8"/><rect x="1055" y="217" width="6" height="7" fill="#fff" stroke="#888" stroke-width="0.8"/><path d="M1063,224 l3,-3 v3 z" fill="#555"/><g stroke="#b0b0b0" stroke-width="1.2" fill="#f4f4f4"><rect x="1073.5" y="205.5" width="17" height="18"/><path d="M1073.5,210 H1090.5 M1073.5,214.5 H1090.5 M1073.5,219 H1090.5 M1078,205.5 V223.5"/></g><rect x="1080" y="216" width="13.5" height="8.5" rx="1" fill="#4a4a4a"/><rect x="1083.5" y="214.5" width="5" height="2.5" fill="#4a4a4a"/><circle cx="1086.5" cy="220" r="2.6" fill="#e8e8e8"/><circle cx="1086.5" cy="220" r="1.4" fill="#4a4a4a"/><g stroke="#7d7440" stroke-width="1.8"><path d="M1105.5,205.5 L1110,210 M1110,205.5 L1105.5,210 M1115,205 L1113,210 M1112,214 L1110,219 M1109,222 L1107,225"/></g><g stroke="#555" stroke-width="1.4" fill="none"><path d="M1117,212 V221 H1124 M1117,221 L1113,225"/></g><path d="M1115,213 L1117,209.5 L1119,213 Z M1123,219 L1126.5,221 L1123,223 Z" fill="#555"/><path d="M1126,225 l3,-3 v3 z" fill="#555"/><path d="M1138,217 L1146,213 L1153,217 V223 L1145,226 L1138,222 Z" fill="#60b0d8" stroke="#2f86b0" stroke-width="1"/><path d="M1138,217 L1145,221 L1153,217 M1145,221 V226" stroke="#b0e0f2" stroke-width="0.9" fill="none"/><path d="M1141,214 Q1141,208 1147,208" stroke="#333" stroke-width="2" fill="none"/><path d="M1146,205 L1150,208 L1146,211 Z" fill="#333"/><path d="M1150,206 H1156 V219 H1152" stroke="#777" stroke-width="1.4" fill="none"/><path d="M1170,211 L1175,206 H1189 V219 L1184,224 H1170 Z" fill="#d9f1fa" stroke="#8cc6dc" stroke-width="1.2"/><path d="M1170,211 H1184 V224 M1184,211 L1189,206" stroke="#8cc6dc" stroke-width="1" fill="none"/><path d="M1170,219 H1184" stroke="#c9c9c9" stroke-width="1"/><path d="M1202,212 L1208,206 H1221 V220 L1216,225 H1202 Z" fill="#c5e7f4" stroke="#7ab8d2" stroke-width="1.2"/><path d="M1202,212 H1216 V225 M1216,212 L1221,206" stroke="#7ab8d2" stroke-width="1" fill="none"/><path d="M1204,223 L1215,214 M1207,224 L1215,217" stroke="#8cc8de" stroke-width="1.3"/><path d="M1234,205 V223 M1253,205 V226" stroke="#333" stroke-width="1.5"/><path d="M1236,208.5 H1251" stroke="#333" stroke-width="1.2"/><path d="M1235.5,208.5 l4,-2.5 v5z M1251.5,208.5 l-4,-2.5 v5z" fill="#333"/><path d="M1243.5,211 V218 M1240,218 H1247" stroke="#2f9abf" stroke-width="2"/><circle cx="1235" cy="222" r="2" fill="#ddd" stroke="#999" stroke-width="0.8"/><ellipse cx="1247.5" cy="222" rx="6" ry="3.5" fill="#2b2b2b"/><circle cx="1247.5" cy="222" r="1.8" fill="#eee"/><path d="M1254,227 l3,-3 v3 z" fill="#555"/><rect x="1266.5" y="207" width="16" height="17" fill="#f4f8fa" stroke="#8fb0bd" stroke-width="1.2"/><rect x="1271" y="211" width="9" height="9" fill="#5cb8e0" stroke="#3a98c0" stroke-width="1"/><path d="M1278,205 Q1285,206 1285,214" stroke="#9cc0d0" stroke-width="1.2" fill="none"/><ellipse cx="1279" cy="222" rx="6" ry="3.5" fill="#2b2b2b"/><circle cx="1279" cy="222" r="1.8" fill="#eee"/><path d="M1286,227 l3,-3 v3 z" fill="#555"/><rect x="1297.5" y="205.5" width="11" height="7" fill="#fdfbe6" stroke="#a8a8a0" stroke-width="1"/><path d="M1309,210.5 H1316 V216" stroke="#333" stroke-width="1.5" fill="none"/><path d="M1312.5,215 L1316,219 L1319.5,215 Z" fill="#333"/><ellipse cx="1311" cy="222" rx="6" ry="3.5" fill="#2b2b2b"/><circle cx="1311" cy="222" r="1.8" fill="#eee"/><path d="M1333,208 L1339,215.5 H1346 M1339,215.5 L1332.5,223" stroke="#555" stroke-width="1.5" fill="none"/><circle cx="1333.5" cy="208" r="2.8" fill="#6cbf6c" stroke="#3c8f3c" stroke-width="0.8"/><circle cx="1346" cy="215.5" r="2.8" fill="#e98a8a" stroke="#b05050" stroke-width="0.8"/><circle cx="1332.5" cy="223" r="2.8" fill="#3a9ec8" stroke="#1f6f98" stroke-width="0.8"/><g fill="none" stroke="#333" stroke-width="1.3"><rect x="14.5" y="195.5" width="4" height="4"/><rect x="14.5" y="205" width="4" height="4"/><rect x="24" y="205" width="4" height="4"/><rect x="14.5" y="211" width="4" height="4"/><path d="M16.5,199.5 V205 M18.5,207 H24 M16.5,209 V211"/></g><g stroke="#d9b87a" stroke-width="1" fill="#fbecc8"><rect x="48" y="196" width="10" height="8" rx="1"/><rect x="52" y="201" width="10" height="8" rx="1"/><rect x="56" y="206" width="10" height="8.5" rx="1"/></g><path d="M88.5,200 H95 L97,198 H103 L105.5,200 V214.5 H88.5 Z" fill="#fbe8c0" stroke="#d9b070" stroke-width="1"/><path d="M96.5,202 V212 M91.5,207 H101.5 M93,203.5 L100,210.5 M100,203.5 L93,210.5" stroke="#1f7fd0" stroke-width="1.4"/><circle cx="96.5" cy="207" r="2.2" fill="#fff" stroke="#1f7fd0" stroke-width="1"/><path d="M15,238 L19,234.5 H31 V247 L27,251 H15 Z" fill="#8a8a8a"/><rect x="15" y="238.5" width="12" height="12.5" fill="#55b043"/><path d="M27,238.5 L31,234.5 V247 L27,251 Z" fill="#9a9a9a"/><path d="M41.5,232 V251" stroke="#c9c9c9" stroke-width="1.5" stroke-dasharray="1.5 2"/><g fill="#333"><path d="M67,232 h5 l-2.5,3z M67,239 h5 l-2.5,3z M67,246 h5 l-2.5,3z"/></g><g fill="#7cd0ee" stroke="#2a7fa8" stroke-width="1.1"><rect x="74" y="231" width="12" height="4.5"/><rect x="74" y="238" width="12" height="4.5"/><rect x="74" y="245" width="12" height="4.5"/></g><g fill="#333"><path d="M99,231 v5 l3,-2.5z M99,238.5 v5 l3,-2.5z M99,246 v5 l3,-2.5z"/></g><g fill="#555"><rect x="104" y="231" width="5" height="5"/><rect x="104" y="238.5" width="5" height="5"/><rect x="104" y="246" width="5" height="5"/></g><g stroke="#a3a3a3" stroke-width="1.2" fill="none"><rect x="127.5" y="232.5" width="16" height="16"/><path d="M127.5,236 H143.5 M133,232.5 V248.5 M138,232.5 V248.5"/></g><ellipse cx="140.5" cy="248" rx="5" ry="3" fill="#a3a3a3"/><g fill="none" stroke="#333" stroke-width="1.3"><rect x="168.5" y="231.5" width="4" height="4"/><rect x="168.5" y="239" width="4" height="4"/><rect x="168.5" y="246.5" width="4" height="4"/><path d="M170.5,235.5 V239 M170.5,243 V246.5"/></g><rect x="168.5" y="239" width="4" height="4" fill="#3a9ec8" stroke="#1f6f98" stroke-width="1"/><path d="M175,241 H187 L182.5,245.5 V251 H179.5 V245.5 Z" fill="#333"/><rect x="198.5" y="232" width="14" height="17" fill="#fff" stroke="#2a7fa8" stroke-width="1.2"/><rect x="198.5" y="232" width="4" height="17" fill="#7cd0ee" stroke="#2a7fa8" stroke-width="1"/><path d="M198.5,236 H212.5 M207,232 V236" stroke="#2a7fa8" stroke-width="1"/><path d="M206,238.5 H213 L216.5,242 V250.5 H206 Z" fill="#f2f2f2" stroke="#888" stroke-width="1"/><path d="M255.5,238 L259.5,241 L255.5,244 M260.5,238 L264.5,241 L260.5,244" stroke="#333" stroke-width="2" fill="none"/><path d="M279,231.5 H290 L294.5,236 V250.5 H279 Z" fill="#f6f6f6" stroke="#bbb" stroke-width="1"/><path d="M290,231.5 V236 H294.5" fill="none" stroke="#bbb"/><circle cx="283" cy="240" r="1.4" fill="none" stroke="#aaa" stroke-width="0.8"/><circle cx="283" cy="245" r="1.4" fill="none" stroke="#aaa" stroke-width="0.8"/><path d="M286,240 H291 M286,245 H291" stroke="#aaa" stroke-width="1"/><path d="M293,254 l3,-3 v3 z" fill="#555"/><path d="M15,272 H34 L27,280 V289 H22 V280 Z" fill="#eee" stroke="#8a8a8a" stroke-width="1.5" stroke-linejoin="round"/><path d="M233.5,275 L242.5,284 M242.5,275 L233.5,284" stroke="#8a8a8a" stroke-width="1.3"/><path d="M256.5,278 h8.5 l-4.25,4.5z" fill="#555"/><path d="M286.5,273 V286 M280,279.5 H293" stroke="#8a8a8a" stroke-width="2.6"/><path d="M15,315 L18.5,311.5 H30.5 V323 L27,326.5 H15 Z" fill="#4eb0d4" stroke="#2f88ad" stroke-width="1"/><rect x="15" y="315" width="12" height="11.5" fill="#bfe6f4" stroke="#2f88ad" stroke-width="1"/><path d="M15,315 L18.5,311.5 H30.5 L27,315 Z" fill="#e6f6fc" stroke="#2f88ad" stroke-width="1"/><path d="M20,342 V352.5 L28.5,347.2 Z" fill="#8a8a8a"/><rect x="40" y="338" width="16.5" height="17.5" fill="#f6fafc" stroke="#7ab4cc" stroke-width="1.2"/><path d="M40,341 H56.5" stroke="#7ab4cc" stroke-width="1.5"/><g fill="#3a9ec8"><rect x="42" y="343" width="3" height="3"/><rect x="42" y="347" width="3" height="3"/><rect x="42" y="351" width="3" height="3"/></g><path d="M47,344.5 H54 M47,348.5 H53 M47,352.5 H54" stroke="#aaa" stroke-width="1"/><path d="M47,344.5 H51" stroke="#d07080" stroke-width="1"/><path d="M39.5,379.5 L44,369 H55.5 L51,379.5 Z" fill="none" stroke="#8b7b59" stroke-width="1.7" stroke-linejoin="round"/><path d="M39.5,407.5 L44,397 H55.5 L51,407.5 Z" fill="none" stroke="#8b7b59" stroke-width="1.7" stroke-linejoin="round"/><path d="M39.5,436.0 L44,425.5 H55.5 L51,436.0 Z" fill="none" stroke="#8b7b59" stroke-width="1.7" stroke-linejoin="round"/><path d="M44,453 V463.5 L56,467 M44,463.5 L39,469" stroke="#8b6b4b" stroke-width="1.6" fill="none"/><circle cx="56.5" cy="467" r="1.4" fill="#8b6b4b"/><circle cx="39" cy="469" r="1.4" fill="#8b6b4b"/><circle cx="44" cy="453" r="1.4" fill="#8b6b4b"/><path d="M13.5,482.3 H301.7" stroke="#6dbb55" stroke-width="1.3"/><path d="M13.5,478.5 V486 M301.7,478.5 V486" stroke="#6dbb55" stroke-width="1.1"/><path d="M17.5,501 H29 L23.25,509 Z" fill="#8a8a8a"/><path d="M38,502 L44,495.5 H57.5 V508 L51.5,514.5 H38 Z" fill="#dceef6" stroke="#9ab8c6" stroke-width="1"/><rect x="38" y="502" width="13.5" height="12.5" fill="#fafcfd" stroke="#a8bcc6" stroke-width="1"/><path d="M51.5,502 L57.5,495.5 V508 L51.5,514.5 Z" fill="#7ec4de"/><path d="M38,502 L44,495.5 H57.5 L51.5,502 Z" fill="#b7e0f0"/><path d="M68.5,497 V503.5 M65.5,498.5 L71.5,502 M71.5,498.5 L65.5,502" stroke="#e6d200" stroke-width="1.6"/><path d="M64,526 H74 M64,526 V543 H81 V533" stroke="#666" stroke-width="1.3" fill="#fff"/><rect x="64.5" y="526.5" width="16" height="16.5" fill="#fff" stroke="#777" stroke-width="1.1"/><path d="M68,539.5 L80.5,526 L83,528.5 L70.5,542 L67,543 Z" fill="#e8e8e8" stroke="#555" stroke-width="1"/><path d="M80.5,526 L83,528.5 L84,524.5 Z" fill="#c04040"/><path d="M92.5,523.5 V530 M89.5,525 L95.5,528.5 M95.5,525 L89.5,528.5" stroke="#e6d200" stroke-width="1.6"/>
</svg>
</body></html>
